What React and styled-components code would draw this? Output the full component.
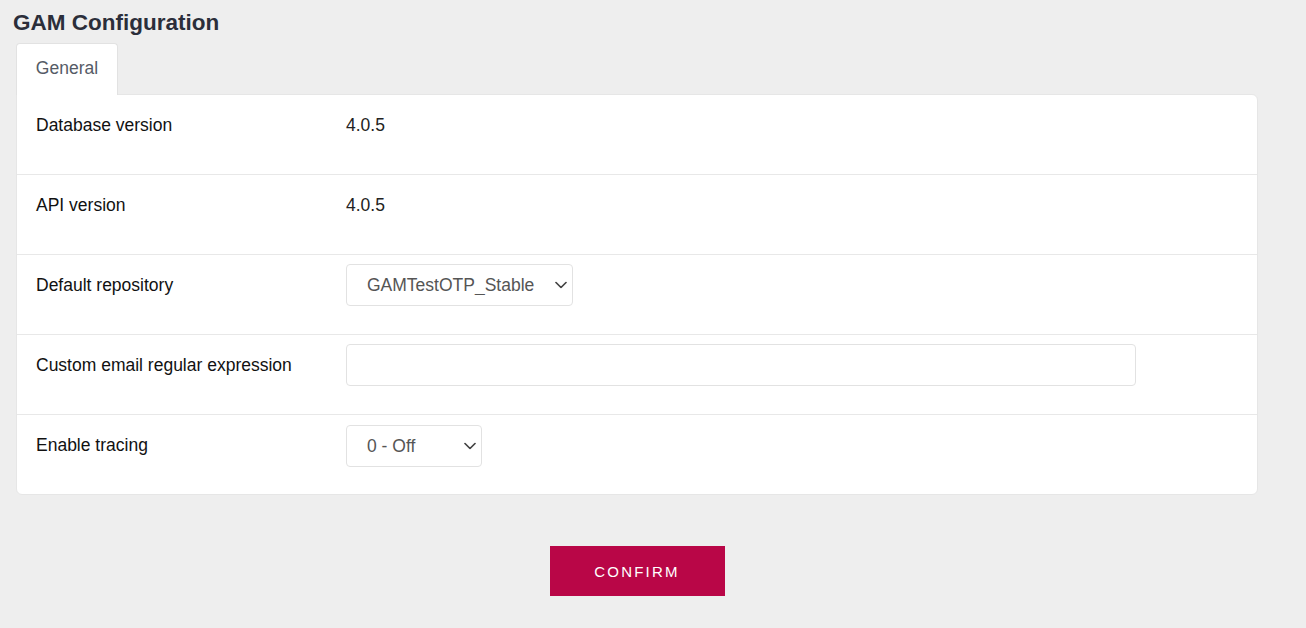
import React from "react";
import styled, { createGlobalStyle } from "styled-components";

const GlobalStyle = createGlobalStyle`
  body {
    margin: 0;
    background: #eeeeee;
    font-family: "Liberation Sans", Arial, sans-serif;
  }
`;

const Chevron = () => (
  <svg width="12" height="7" viewBox="0 0 12 7" fill="none">
    <path d="M1 1l5 5l5-5" stroke="#444" strokeWidth="1.7" strokeLinecap="round" strokeLinejoin="round" />
  </svg>
);

const SelectBox = ({ width, value, options }) => (
  <SelectWrap $width={width}>
    <Select defaultValue={value}>
      {options.map((o) => (
        <option key={o}>{o}</option>
      ))}
    </Select>
    <ArrowSlot>
      <Chevron />
    </ArrowSlot>
  </SelectWrap>
);

const App = () => {
  return (
    <Page>
      <GlobalStyle />
      <Title>GAM Configuration</Title>
      <Tabs>
        <Tab>General</Tab>
      </Tabs>
      <Panel>
        <Row>
          <Label>Database version</Label>
          <Value>4.0.5</Value>
        </Row>
        <Row>
          <Label>API version</Label>
          <Value>4.0.5</Value>
        </Row>
        <Row>
          <Label>Default repository</Label>
          <SelectBox width={227} value="GAMTestOTP_Stable" options={["GAMTestOTP_Stable"]} />
        </Row>
        <Row>
          <Label>Custom email regular expression</Label>
          <Input type="text" />
        </Row>
        <Row $last>
          <Label>Enable tracing</Label>
          <SelectBox width={136} value="0 - Off" options={["0 - Off", "1 - Debug"]} />
        </Row>
      </Panel>
      <Actions>
        <ConfirmButton>Confirm</ConfirmButton>
      </Actions>
    </Page>
  );
};

export default App;

const Page = styled.div`
  width: 1258px;
  padding: 8px 0 0 16px;
  min-height: 100vh;
  box-sizing: border-box;
`;

const Title = styled.h1`
  margin: 0 0 5px -3px;
  font-size: 22.5px;
  line-height: 30px;
  font-weight: 700;
  color: #2b2e3a;
`;

const Tabs = styled.div`
  display: flex;
  position: relative;
  z-index: 1;
  margin-bottom: -1px;
`;

const Tab = styled.div`
  width: 102px;
  height: 52px;
  box-sizing: border-box;
  padding-bottom: 2px;
  display: flex;
  align-items: center;
  justify-content: center;
  background: #fff;
  border: 1px solid #e2e2e2;
  border-bottom: none;
  border-radius: 4px 4px 0 0;
  font-size: 17.5px;
  color: #555b66;
`;

const Panel = styled.div`
  background: #fff;
  border: 1px solid #e6e6e6;
  border-radius: 0 6px 6px 6px;
`;

const Row = styled.div`
  display: flex;
  align-items: center;
  height: ${(p) => (p.$last ? 79 : 80)}px;
  box-sizing: border-box;
  padding: 9px 19px ${(p) => (p.$last ? 27 : 28)}px;
  border-bottom: ${(p) => (p.$last ? "none" : "1px solid #e8e8e8")};
`;

const Label = styled.div`
  width: 310px;
  flex-shrink: 0;
  font-size: 17.5px;
  color: #111;
`;

const Value = styled.div`
  font-size: 17.5px;
  color: #222;
`;

const SelectWrap = styled.div`
  position: relative;
  width: ${(p) => p.$width}px;
  height: 42px;
`;

const Select = styled.select`
  appearance: none;
  width: 100%;
  height: 100%;
  box-sizing: border-box;
  padding: 0 30px 0 20px;
  border: 1px solid #e2e2e2;
  border-radius: 4px;
  background: #fff;
  font-family: "Liberation Sans", Arial, sans-serif;
  font-size: 17.5px;
  color: #555;
  outline: none;
`;

const ArrowSlot = styled.span`
  position: absolute;
  right: 6px;
  top: 50%;
  transform: translateY(-50%);
  display: flex;
  pointer-events: none;
`;

const Input = styled.input`
  width: 790px;
  height: 42px;
  box-sizing: border-box;
  border: 1px solid #e2e2e2;
  border-radius: 4px;
  padding: 0 12px;
  font-family: "Liberation Sans", Arial, sans-serif;
  font-size: 17.5px;
  outline: none;
`;

const Actions = styled.div`
  display: flex;
  justify-content: center;
  padding-top: 51px;
`;

const ConfirmButton = styled.button`
  width: 175px;
  height: 50px;
  border: none;
  background: #b90647;
  color: #fff;
  font-family: "Liberation Sans", Arial, sans-serif;
  font-size: 15px;
  letter-spacing: 2.2px;
  text-transform: uppercase;
  cursor: pointer;
`;
